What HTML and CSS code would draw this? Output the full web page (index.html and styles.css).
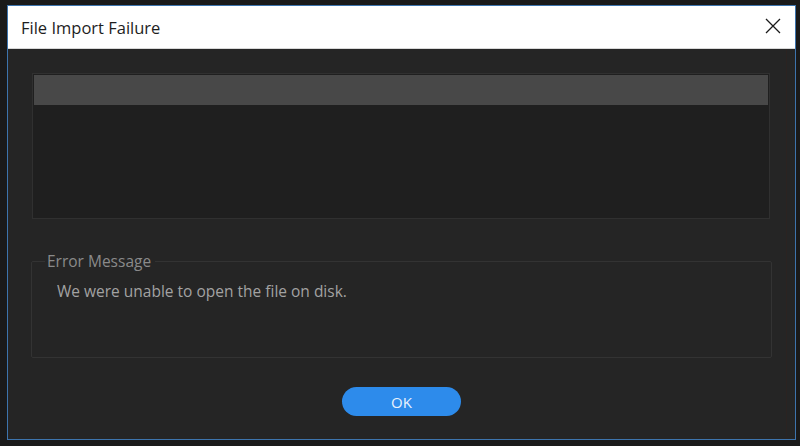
FILE: index.html
```html
<!DOCTYPE html>
<html>
<head>
<meta charset="utf-8">
<link rel="stylesheet" href="styles.css">
</head>
<body>
<div class="window">
  <div class="titlebar">
    <span class="title">File Import Failure</span>
    <span class="close" aria-label="Close">
      <svg width="16" height="16" viewBox="0 0 16 16"><path d="M1 1 L15 15 M15 1 L1 15" stroke="#1a1a1a" stroke-width="1.3" fill="none"/></svg>
    </span>
  </div>
  <div class="content">
    <div class="listbox">
      <div class="listhead"></div>
    </div>
    <fieldset class="group">
      <legend>Error Message</legend>
      <p class="message">We were unable to open the file on disk.</p>
    </fieldset>
    <div class="actions">
      <button class="ok">OK</button>
    </div>
  </div>
</div>
</body>
</html>
```
FILE: styles.css
```css
html, body {
  margin: 0;
  padding: 0;
  background: #1a1a1a;
  font-family: "Open Sans", "Noto Sans", sans-serif;
}
.window {
  margin: 5px 0 0 7px;
  width: 787px;
  height: 433px;
  border: 1px solid #3d74ad;
  background: #252525;
  display: flex;
  flex-direction: column;
}
.titlebar {
  height: 42px;
  background: #ffffff;
  display: flex;
  align-items: center;
  justify-content: space-between;
  padding: 0 14px 0 13px;
  border-bottom: 1px solid #d8d8d8;
  flex: none;
}
.title {
  font-size: 16.5px;
  color: #1e1e1e;
}
.close {
  display: flex;
  margin-top: -2px;
}
.content {
  flex: 1;
  padding: 24px 25px 0 24px;
  display: flex;
  flex-direction: column;
  box-shadow: inset -8px 0 0 #252525, inset -9px 0 0 #2b2321;
}
.listbox {
  height: 142px;
  border: 1px solid #303030;
  background: #1f1f1f;
  padding: 1px;
}
.listhead {
  height: 30px;
  background: #484848;
}
.group {
  margin: 31px -2px 0 -1px;
  height: 108px;
  box-sizing: border-box;
  border: 1px solid #333333;
  border-radius: 2px;
  padding: 0 0 0 25px;
  min-width: 0;
}
.group legend {
  margin-left: -12px;
  padding: 0 4px 0 2px;
  font-size: 15.5px;
  color: #8a8a8a;
}
.message {
  margin: 8px 0 0 0;
  font-size: 15.5px;
  color: #a2a2a2;
}
.actions {
  display: flex;
  justify-content: center;
  padding-top: 29px;
}
.ok {
  width: 119px;
  height: 29px;
  border: none;
  border-radius: 15px;
  background: #2d8beb;
  color: #e8f2fd;
  font-family: "Open Sans", "Noto Sans", sans-serif;
  font-size: 15px;
  padding: 0;
  margin-left: 1px;
}
```
